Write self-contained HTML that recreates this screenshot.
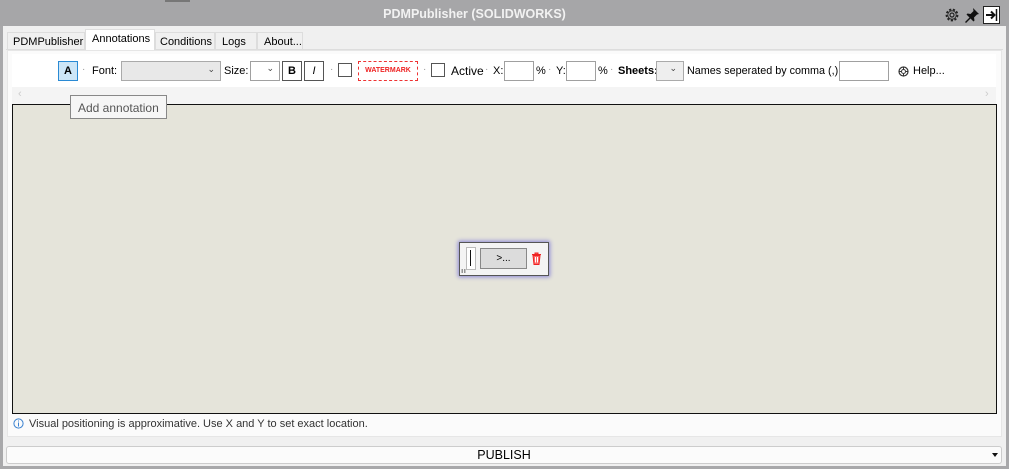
<!DOCTYPE html>
<html><head><style>
*{box-sizing:border-box;margin:0;padding:0}
body{width:1009px;height:469px;background:#a8a8aa;font-family:"Liberation Sans",sans-serif;font-size:11px;color:#000;position:relative;overflow:hidden}
.a{position:absolute}
.t{white-space:nowrap}
.box{position:absolute;border:1px solid #a0a0a0;background:#fff}
.dot{position:absolute;color:#999;font-size:10px}
</style></head><body>
<div class="a" style="left:0;top:0;width:1009px;height:26px;background:#a6a6a8"></div>
<div class="a" style="left:165px;top:0;width:25px;height:2px;background:#777"></div>
<div class="a t" style="left:0;width:949px;top:7px;text-align:center;color:#f2f2f2;font-weight:bold;font-size:12.5px">PDMPublisher (SOLIDWORKS)</div>
<svg class="a" style="left:944px;top:7px" width="16" height="16" viewBox="0 0 16 16"><circle cx="8" cy="8" r="5.5" fill="none" stroke="#222" stroke-width="1.8" stroke-dasharray="2.2 1.6"/><circle cx="8" cy="8" r="4.2" fill="none" stroke="#222" stroke-width="0.8"/><circle cx="8" cy="8" r="2" fill="none" stroke="#222" stroke-width="1.2"/></svg>
<svg class="a" style="left:964px;top:7px" width="16" height="16" viewBox="0 0 16 16"><path d="M9 1l6 6-2 0.5-3 3 0.5 3-1 1-3-3-4.5 4.5-1-1 4.5-4.5-3-3 1-1 3 0.5 3-3z" fill="#111"/></svg>
<div class="a" style="left:983px;top:6px;width:17px;height:18px;border:1px solid #222;background:#fff"></div>
<svg class="a" style="left:984px;top:8px" width="15" height="14" viewBox="0 0 15 14"><path d="M2 7h8M7 3.5l3.5 3.5L7 10.5" fill="none" stroke="#111" stroke-width="2"/><path d="M12.5 1v12" stroke="#111" stroke-width="1.5"/></svg>
<div class="a" style="left:3px;top:26px;width:1003px;height:440px;background:#f0f0f0"></div>
<!-- tabs -->
<div class="a" style="left:6px;top:49px;width:997px;height:1px;background:#ddd"></div>
<div class="a t" style="left:7px;top:32px;width:78px;height:17px;border:1px solid #ddd;border-bottom:0;padding:3px 0 0 5px;font-size:11px">PDMPublisher</div>
<div class="a t" style="left:85px;top:29px;width:70px;height:21px;border:1px solid #ddd;border-bottom:0;background:#fff;padding:3px 0 0 6px;font-size:11px">Annotations</div>
<div class="a t" style="left:155px;top:32px;width:60px;height:17px;border:1px solid #ddd;border-bottom:0;padding:3px 0 0 4px">Conditions</div>
<div class="a t" style="left:215px;top:32px;width:42px;height:17px;border:1px solid #ddd;border-bottom:0;padding:3px 0 0 6px">Logs</div>
<div class="a t" style="left:257px;top:32px;width:46px;height:17px;border:1px solid #ddd;border-bottom:0;padding:3px 0 0 6px">About...</div>
<!-- panel -->
<div class="a" style="left:7px;top:50px;width:995px;height:387px;background:#fbfbfb;border:1px solid #e6e6e6"></div>
<div class="a" style="left:12px;top:54px;width:984px;height:33px;background:#fff"></div>
<div class="a" style="left:12px;top:87px;width:984px;height:17px;background:#f4f4f4"></div>
<div class="a t" style="left:18px;top:88px;color:#ccc;font-size:11px">&lsaquo;</div>
<div class="a t" style="left:985px;top:88px;color:#ccc;font-size:11px">&rsaquo;</div>
<!-- toolbar -->
<div class="a" style="left:58px;top:61px;width:20px;height:20px;background:#cde6f7;border:1px solid #2a8ad4;text-align:center;font-weight:bold;line-height:18px">A</div>
<div class="dot" style="left:82px;top:64px">·</div>
<div class="a t" style="left:92px;top:65px">Font:</div>
<div class="a" style="left:121px;top:61px;width:100px;height:20px;background:#e8e8e8;border:1px solid #aaa"><span class="a" style="right:5px;top:2px;font-size:9px;color:#444">&#8964;</span></div>
<div class="a t" style="left:224px;top:65px">Size:</div>
<div class="box" style="left:250px;top:61px;width:30px;height:20px"><span class="a" style="right:5px;top:1px;font-size:9px;color:#444">&#8964;</span></div>
<div class="box" style="left:282px;top:61px;width:20px;height:20px;border-color:#555;text-align:center;font-weight:bold;line-height:18px">B</div>
<div class="box" style="left:304px;top:61px;width:20px;height:20px;border-color:#555;text-align:center;font-style:italic;line-height:18px">I</div>
<div class="dot" style="left:330px;top:64px">·</div>
<div class="box" style="left:338px;top:63px;width:14px;height:14px;border-color:#555"></div>
<div class="a t" style="left:358px;top:61px;width:60px;height:20px;border:1px dashed #e33;text-align:center;color:#e22;font-weight:bold;font-size:7px;line-height:18px">WATERMARK</div>
<div class="dot" style="left:423px;top:64px">·</div>
<div class="box" style="left:431px;top:63px;width:14px;height:14px;border-color:#555"></div>
<div class="a t" style="left:451px;top:64px;font-size:12px">Active</div>
<div class="dot" style="left:485px;top:64px">·</div>
<div class="a t" style="left:493px;top:65px">X:</div>
<div class="box" style="left:504px;top:61px;width:30px;height:20px"></div>
<div class="a t" style="left:536px;top:65px">%</div>
<div class="dot" style="left:548px;top:64px">·</div>
<div class="a t" style="left:556px;top:65px">Y:</div>
<div class="box" style="left:566px;top:61px;width:30px;height:20px"></div>
<div class="a t" style="left:598px;top:65px">%</div>
<div class="dot" style="left:610px;top:64px">·</div>
<div class="a t" style="left:618px;top:65px;font-weight:bold">Sheets:</div>
<div class="a" style="left:656px;top:61px;width:28px;height:20px;background:#eee;border:1px solid #aaa"><span class="a" style="right:6px;top:1px;font-size:9px;color:#444">&#8964;</span></div>
<div class="a t" style="left:687px;top:65px;font-size:10.8px">Names seperated by comma (,)</div>
<div class="box" style="left:839px;top:61px;width:50px;height:20px"></div>
<svg class="a" style="left:898px;top:66px" width="11" height="11" viewBox="0 0 11 11"><circle cx="5.5" cy="5.5" r="4.5" fill="none" stroke="#333" stroke-width="1.2"/><circle cx="5.5" cy="5.5" r="2" fill="none" stroke="#333"/><path d="M5.5 1v2M5.5 8v2M1 5.5h2M8 5.5h2" stroke="#333"/></svg>
<div class="a t" style="left:913px;top:65px">Help...</div>
<!-- canvas -->
<div class="a" style="left:12px;top:104px;width:985px;height:310px;background:#e5e4da;border:1px solid #111"></div>
<div class="a t" style="left:70px;top:95px;width:97px;height:24px;background:#f6f6f6;border:1px solid #888;padding:5px 0 0 7px;font-size:12px;color:#555">Add annotation</div>
<!-- widget -->
<div class="a" style="left:459px;top:242px;width:90px;height:34px;background:#f4f4f4;border:1px solid #555;box-shadow:0 0 4px 1px #8a86d8"></div>
<div class="a" style="left:466px;top:247px;width:10px;height:23px;background:#fff;border:1px solid #bbb"></div>
<div class="a" style="left:470px;top:250px;width:1px;height:16px;background:#111"></div>
<div class="a t" style="left:480px;top:248px;width:47px;height:21px;background:#dcdcdc;border:1px solid #888;text-align:center;line-height:19px;font-size:10px">&gt;...</div>
<svg class="a" style="left:531px;top:252px" width="11" height="13" viewBox="0 0 11 13"><path d="M1 2.5h9M4 2.5V1h3v1.5M2 3.5l1 9h5l1-9z" fill="#f66" stroke="#e22" stroke-width="1"/><path d="M4.5 5v5.5M6.5 5v5.5" stroke="#fff"/></svg>
<div class="a" style="left:461px;top:269px;width:5px;height:4px;background:radial-gradient(#333 40%,transparent 45%) 0 0/2.5px 2px"></div>
<!-- info -->
<svg class="a" style="left:13px;top:418px" width="11" height="11" viewBox="0 0 11 11"><circle cx="5.5" cy="5.5" r="4.6" fill="none" stroke="#3a82d0"/><path d="M5.5 4.5v4M5.5 2.5v1" stroke="#3a82d0"/></svg>
<div class="a t" style="left:29px;top:418px;color:#333">Visual positioning is approximative. Use X and Y to set exact location.</div>
<!-- publish -->
<div class="a t" style="left:6px;top:446px;width:996px;height:18px;background:#fbfbfb;border:1px solid #ccc;border-radius:3px;text-align:center;font-size:12.5px;line-height:16px">PUBLISH</div>
<div class="a" style="left:992px;top:453px;border-left:3px solid transparent;border-right:3px solid transparent;border-top:4px solid #111"></div>
</body></html>
